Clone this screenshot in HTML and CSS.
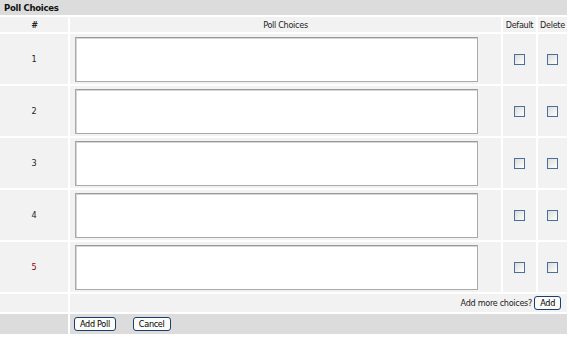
FILE: index.html
```html
<!DOCTYPE html>
<html>
<head>
<meta charset="utf-8">
<link rel="stylesheet" href="styles.css">
</head>
<body>
<table class="poll">
  <colgroup><col class="c1"><col class="c2"><col class="c3"><col class="c4"></colgroup>
  <tr><td class="title" colspan="4">Poll Choices</td></tr>
  <tr class="head">
    <td class="num"><b><i>#</i></b></td>
    <td class="choice-h">Poll Choices</td>
    <td class="def">Default</td>
    <td class="del">Delete</td>
  </tr>
  <tr class="row"><td class="num">1</td><td class="choice"><textarea class="ta"></textarea></td><td class="def"><span class="cb"></span></td><td class="del"><span class="cb"></span></td></tr>
  <tr class="row"><td class="num">2</td><td class="choice"><textarea class="ta"></textarea></td><td class="def"><span class="cb"></span></td><td class="del"><span class="cb"></span></td></tr>
  <tr class="row"><td class="num">3</td><td class="choice"><textarea class="ta"></textarea></td><td class="def"><span class="cb"></span></td><td class="del"><span class="cb"></span></td></tr>
  <tr class="row"><td class="num">4</td><td class="choice"><textarea class="ta"></textarea></td><td class="def"><span class="cb"></span></td><td class="del"><span class="cb"></span></td></tr>
  <tr class="row"><td class="num red">5</td><td class="choice"><textarea class="ta"></textarea></td><td class="def"><span class="cb"></span></td><td class="del"><span class="cb"></span></td></tr>
  <tr class="addrow">
    <td class="num"></td>
    <td class="more" colspan="3">Add more choices? <button class="btn">Add</button></td>
  </tr>
  <tr class="foot">
    <td class="fnum"></td>
    <td class="fbtns" colspan="3"><button class="btn">Add Poll</button><button class="btn cancel">Cancel</button></td>
  </tr>
</table>
</body>
</html>
```
FILE: styles.css
```css
html, body { margin: 0; padding: 0; background: #fff; }
body { font-family: "DejaVu Sans Condensed", "Liberation Sans", sans-serif; font-size: 9px; letter-spacing: -0.3px; color: #222; }
.poll { border-collapse: separate; border-spacing: 0; width: 567px; table-layout: fixed; }
.c1 { width: 70px; }
.c2 { width: 433px; }
.c3 { width: 35px; }
.c4 { width: 29px; }
.poll td { padding: 0; background: #f2f2f2; border-right: 2px solid #fff; border-bottom: 2px solid #fff; vertical-align: middle; }
.poll td:last-child { border-right: 0; }
.poll td.title { background: #dcdcdc; font-weight: bold; font-size: 9.5px; height: 15px; padding-left: 4px; text-align: left; border-right: 0; color: #111; }
.head td { height: 15px; text-align: center; }
.num { text-align: center; }
.def { text-align: center; }
.del { text-align: center; }
.row td { height: 50px; }
.poll td.choice { padding-left: 5px; }
.ta { display: block; box-sizing: border-box; width: 403px; height: 45px; margin: 0; border: 1px solid #a9a9a9; border-top-color: #9a9a9a; box-shadow: inset 1px 1px 0 #d6d6d6; background: #fff; resize: none; }
.cb { display: inline-block; width: 9px; height: 9px; border: 1px solid #4a6f9d; background: linear-gradient(135deg, #dcdcd6, #fff); vertical-align: middle; }
.poll td.red { color: #990000; }
.addrow td { height: 18px; }
.poll td.more { text-align: right; padding-right: 6px; }
.btn { font-family: inherit; font-size: 9px; letter-spacing: -0.3px; background: #fbfbf8; border: 1px solid #1c3e6e; border-radius: 3px; padding: 0 5px; height: 14px; line-height: 11px; margin: 0; color: #000; }
.poll .foot td { background: #dcdcdc; height: 20px; border-bottom: 0; }
.poll td.fbtns { padding-left: 4px; }
.cancel { margin-left: 17px; }
```
